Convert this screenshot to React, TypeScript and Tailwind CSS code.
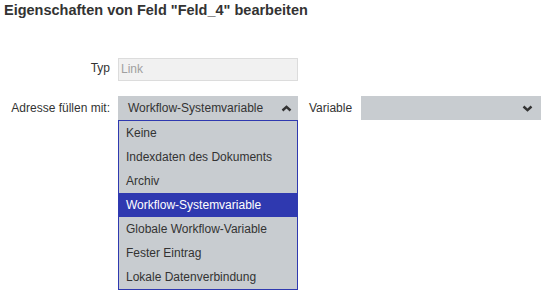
import React, { useState } from "react";

const options = [
  "Keine",
  "Indexdaten des Dokuments",
  "Archiv",
  "Workflow-Systemvariable",
  "Globale Workflow-Variable",
  "Fester Eintrag",
  "Lokale Datenverbindung",
];

const Chevron: React.FC<{ up?: boolean }> = ({ up }) => (
  <svg width="11" height="7" viewBox="0 0 11 7" className="shrink-0">
    <polyline
      points={up ? "1.5,5.5 5.5,1.8 9.5,5.5" : "1.5,1.5 5.5,5.2 9.5,1.5"}
      fill="none"
      stroke="#333"
      strokeWidth="2.4"
    />
  </svg>
);

const App: React.FC = () => {
  const [selected, setSelected] = useState("Workflow-Systemvariable");
  const [isOpen, setIsOpen] = useState(true);

  return (
    <div
      className="w-[548px] h-[296px] bg-white text-[#333] text-[12px] overflow-hidden whitespace-nowrap"
      style={{ fontFamily: '"Liberation Sans", Arial, sans-serif' }}
    >
      <h1 className="pl-[4px] pt-[1px] text-[14.5px] font-bold leading-[18px] text-[#333]">
        Eigenschaften von Feld "Feld_4" bearbeiten
      </h1>

      <div className="mt-[39px] grid grid-cols-[110px_1fr] gap-x-[8px] gap-y-[15px] items-start">
        <div className="text-right leading-[20px]">Typ</div>
        <div className="w-[180px] h-[23px] bg-[#f1f1f1] border border-[#dcdcdc] px-[2px] leading-[21px] text-[#a0a0a0]">
          Link
        </div>

        <div className="text-right leading-[24px]">Adresse füllen mit:</div>
        <div className="flex items-center">
          <div className="relative w-[180px] shrink-0">
            <button
              onClick={() => setIsOpen(!isOpen)}
              className="w-full h-[24px] bg-[#c8ccd0] flex items-center justify-between pl-[10px] pr-[6px] text-[#333]"
            >
              <span>{selected}</span>
              <Chevron up={isOpen} />
            </button>
            {isOpen && (
              <ul className="absolute left-0 top-[24px] w-full bg-[#c8ccd0] border border-[#2f39b0] z-10">
                {options.map((opt) => (
                  <li
                    key={opt}
                    onClick={() => {
                      setSelected(opt);
                      setIsOpen(false);
                    }}
                    className={
                      opt === selected
                        ? "h-[24px] leading-[24px] pl-[7px] bg-[#2f39b0] text-white"
                        : "h-[24px] leading-[24px] pl-[7px] text-[#333]"
                    }
                  >
                    {opt}
                  </li>
                ))}
              </ul>
            )}
          </div>
          <span className="ml-[11px] shrink-0 leading-[24px]">Variable</span>
          <div className="ml-[9px] shrink-0 w-[180px] h-[24px] bg-[#c8ccd0] flex items-center justify-end pr-[8px]">
            <Chevron />
          </div>
        </div>
      </div>
    </div>
  );
};

export default App;
